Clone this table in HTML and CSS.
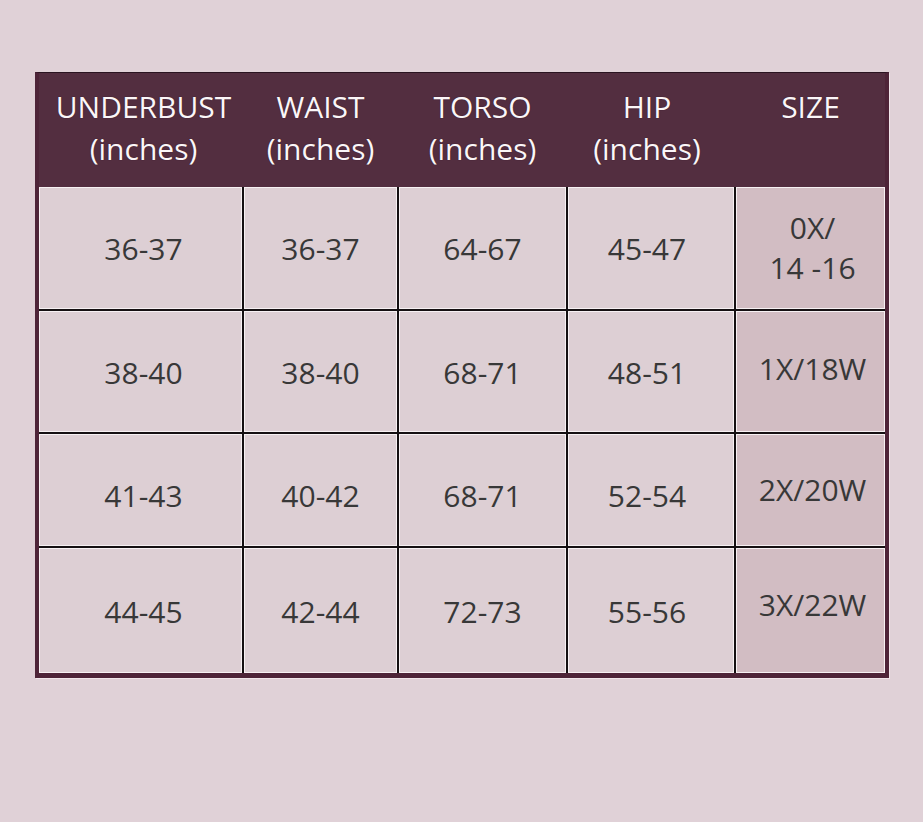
FILE: index.html
```html
<!DOCTYPE html>
<html lang="en">
<head>
<meta charset="utf-8">
<title>Size Chart</title>
<link rel="stylesheet" href="styles.css">
</head>
<body>
<div class="page">
  <div class="chart">
    <div class="head">
      <div class="hcell c1">UNDERBUST<br>(inches)</div>
      <div class="hcell">WAIST<br>(inches)</div>
      <div class="hcell">TORSO<br>(inches)</div>
      <div class="hcell c4">HIP<br>(inches)</div>
      <div class="hcell">SIZE</div>
    </div>
    <div class="body">
      <div class="cell c1">36-37</div>
      <div class="cell">36-37</div>
      <div class="cell">64-67</div>
      <div class="cell c4">45-47</div>
      <div class="cell size">0X/<br>14 -16</div>

      <div class="cell c1">38-40</div>
      <div class="cell">38-40</div>
      <div class="cell">68-71</div>
      <div class="cell c4">48-51</div>
      <div class="cell size up">1X/18W</div>

      <div class="cell low c1">41-43</div>
      <div class="cell low">40-42</div>
      <div class="cell low">68-71</div>
      <div class="cell low c4">52-54</div>
      <div class="cell size">2X/20W</div>

      <div class="cell c1">44-45</div>
      <div class="cell">42-44</div>
      <div class="cell">72-73</div>
      <div class="cell c4">55-56</div>
      <div class="cell size up2">3X/22W</div>
    </div>
  </div>
</div>
</body>
</html>
```

FILE: styles.css
```css
html, body {
  margin: 0;
  padding: 0;
  background: #e0d1d7;
}
body {
  font-family: "Open Sans", "Noto Sans", sans-serif;
  width: 923px;
  height: 822px;
  overflow: hidden;
}
.page {
  padding: 72px 0 0 35px;
}
.chart {
  width: 846px;
  border-top: 1px solid #2a1420;
  border-left: 4px solid #4e2438;
  border-right: 4px solid #4e2438;
  border-bottom: 5px solid #4e2438;
  background: #4e2438;
  box-shadow: 1px 1px 0 #f0e6ea;
}
.head {
  display: grid;
  grid-template-columns: 203px 153px 167px 166px 149px;
  column-gap: 2px;
  height: 114px;
  background: #532e40;
}
.hcell {
  color: #fbf6f8;
  font-size: 30px;
  line-height: 42px;
  text-align: center;
  padding-top: 13px;
  text-shadow: 0 0 1px #2a1220;
}
.body {
  display: grid;
  grid-template-columns: 203px 153px 167px 166px 149px;
  grid-template-rows: 122px 121px 112px 125px;
  gap: 2px;
  background: #151012;
}
.cell {
  background: #ddcfd4;
  box-shadow: inset 0 0 0 1px #f7f1f3;
  color: #383838;
  font-size: 30px;
  line-height: 40px;
  display: flex;
  align-items: center;
  justify-content: center;
  text-align: center;
  padding-top: 2px;
}
.c1 {
  padding-left: 6px;
}
.c4 {
  padding-right: 8px;
}
.cell.low {
  padding-top: 12px;
}
.cell.size {
  background: #d2bdc3;
  padding-top: 0;
  padding-left: 4px;
}
.cell.size.up {
  padding-bottom: 6px;
}
.cell.size.up2 {
  padding-bottom: 12px;
}
```
